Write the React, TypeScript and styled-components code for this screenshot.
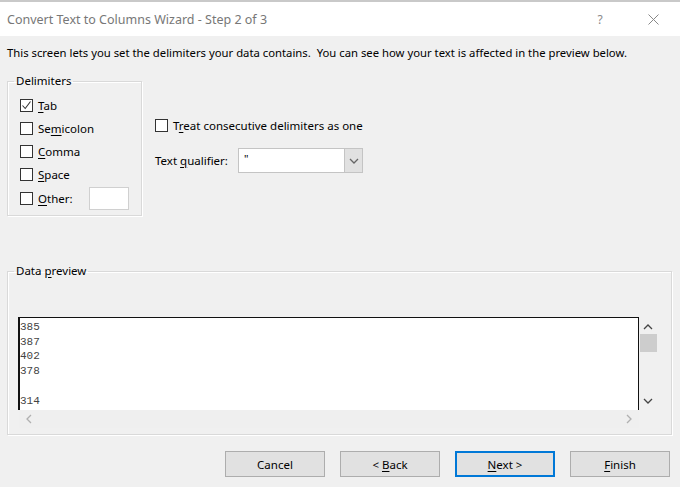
import React from "react";
import styled, { createGlobalStyle } from "styled-components";

const Global = createGlobalStyle`
  html, body { margin: 0; padding: 0; background: #f0f0f0; }
  body { width: 680px; height: 487px; overflow: hidden; font-family: "Noto Sans", "Open Sans", sans-serif; }
  * { box-sizing: border-box; }
`;

const Dialog = styled.div`
  width: 680px;
  height: 487px;
  display: flex;
  flex-direction: column;
  background: #f0f0f0;
  border-top: 2px solid #c9c9c9;
`;

const TitleBar = styled.div`
  height: 34px;
  background: #fff;
  display: flex;
  align-items: center;
  padding-left: 7px;
  color: #777;
  font-size: 12.5px;
`;

const Title = styled.div`
  flex: 1;
`;

const TitleBtn = styled.div<{ $w: number }>`
  width: ${(p) => p.$w}px;
  display: flex;
  justify-content: center;
  color: #8a8a8a;
  font-size: 12px;
`;

const Body = styled.div`
  flex: 1;
  display: flex;
  flex-direction: column;
  padding: 8px 9px 0 7px;
  font-size: 11.5px;
  color: #000;
`;

const Intro = styled.div`
  height: 16px;
  line-height: 16px;
  font-size: 11.3px;
  padding-top: 1px;
`;

const TopRow = styled.div`
  display: flex;
  margin-top: 13px;
`;

const Group = styled.fieldset<{ $w: number; $h: number }>`
  margin: 0;
  width: ${(p) => p.$w}px;
  height: ${(p) => p.$h}px;
  border: 1px solid #d9d9d9;
  box-shadow: inset 1px 1px 0 #fff, 1px 1px 0 #fff;
  padding: 0;
`;

const Legend = styled.legend`
  margin-left: 6px;
  padding: 0 2px;
  font-size: 11.5px;
  line-height: 16px;
  color: #000;
`;

const DelimList = styled.div`
  display: flex;
  flex-direction: column;
  padding: 5px 0 0 12px;
`;

const CheckRow = styled.div<{ $h?: number }>`
  display: flex;
  align-items: center;
  height: ${(p) => p.$h ?? 23}px;
  gap: 5px;
`;

const Box = styled.span`
  width: 13px;
  height: 13px;
  border: 1px solid #333;
  background: #fff;
  display: inline-flex;
  align-items: center;
  justify-content: center;
  flex: none;
`;

const U = styled.span`
  text-decoration: underline;
  text-underline-offset: 2px;
`;

const OtherInput = styled.div`
  width: 40px;
  height: 23px;
  background: #fff;
  border: 1px solid #d0d0d0;
  margin-left: 11px;
`;

const RightCol = styled.div`
  display: flex;
  flex-direction: column;
  padding: 44px 0 0 13px;
`;

const QualRow = styled.div`
  display: flex;
  align-items: center;
  margin-top: 15px;
`;

const QualLabel = styled.span`
  width: 83px;
`;

const Select = styled.div`
  width: 125px;
  height: 25px;
  background: #fff;
  border: 1px solid #c4c4c4;
  display: flex;
`;

const SelectValue = styled.div`
  flex: 1;
  padding: 2px 0 0 5px;
  font-size: 11px;
`;

const SelectBtn = styled.div`
  width: 18px;
  background: #e1e1e1;
  border-left: 1px solid #c4c4c4;
  display: flex;
  align-items: center;
  justify-content: center;
`;

const PreviewGroup = styled(Group)`
  margin-top: 47px;
`;

const PreviewArea = styled.div`
  display: grid;
  grid-template-columns: 620px 18px;
  grid-template-rows: 93px 18px;
  margin: 38px 0 0 11px;
`;

const PreviewBox = styled.div`
  background: #fff;
  border-left: 2px solid #111;
  border-top: 1px solid #111;
  border-right: 1px solid #111;
  font-family: "Liberation Mono", monospace;
  font-size: 11px;
  line-height: 14.7px;
  color: #444;
  padding: 2px 0 0 0;
  margin-left: -1px;
  white-space: pre;
  overflow: hidden;
`;

const VScroll = styled.div`
  display: flex;
  flex-direction: column;
  align-items: center;
  background: #f0f0f0;
`;

const Thumb = styled.div`
  width: 17px;
  height: 18px;
  background: #cdcdcd;
  margin-top: 3px;
`;

const HScroll = styled.div`
  display: flex;
  align-items: center;
  justify-content: space-between;
  padding: 0 6px 0 6px;
  background: #efefef;
`;

const Buttons = styled.div`
  display: flex;
  justify-content: flex-end;
  gap: 15px;
  margin-top: 16px;
  padding-right: 1px;
`;

const Btn = styled.div<{ $primary?: boolean }>`
  width: 100px;
  height: 26px;
  background: #e1e1e1;
  border: ${(p) => (p.$primary ? "2px solid #0078d7" : "1px solid #adadad")};
  display: flex;
  align-items: center;
  justify-content: center;
  font-size: 11.5px;
  color: #000;
`;

const Check = () => (
  <svg width="11" height="11" viewBox="0 0 11 11">
    <path d="M1.5 5.5 L4.2 8.5 L9.5 1.5" fill="none" stroke="#333" strokeWidth="1.1" />
  </svg>
);

const Chevron = ({ dir, color = "#444" }: { dir: "up" | "down" | "left" | "right"; color?: string }) => {
  const d = {
    up: "M1 6 L5 2 L9 6",
    down: "M1 2 L5 6 L9 2",
    left: "M6 1 L2 5 L6 9",
    right: "M2 1 L6 5 L2 9",
  }[dir];
  const horiz = dir === "up" || dir === "down";
  return (
    <svg width={horiz ? 10 : 8} height={horiz ? 8 : 10} viewBox={horiz ? "0 0 10 8" : "0 0 8 10"}>
      <path d={d} fill="none" stroke={color} strokeWidth="1.3" />
    </svg>
  );
};

const Spacer = styled.div<{ $h?: number }>`
  height: ${(p) => (p.$h ? `${p.$h}px` : "auto")};
  flex: ${(p) => (p.$h ? "none" : "1")};
`;

const delims: { pre: string; u: string; post: string; checked?: boolean }[] = [
  { pre: "", u: "T", post: "ab", checked: true },
  { pre: "Se", u: "m", post: "icolon" },
  { pre: "", u: "C", post: "omma" },
  { pre: "", u: "S", post: "pace" },
];

export default function App() {
  return (
    <>
      <Global />
      <Dialog>
        <TitleBar>
          <Title>Convert Text to Columns Wizard - Step 2 of 3</Title>
          <TitleBtn $w={52}>?</TitleBtn>
          <TitleBtn $w={54}>
            <svg width="11" height="11" viewBox="0 0 11 11">
              <path d="M0.5 0.5 L10.5 10.5 M10.5 0.5 L0.5 10.5" stroke="#888" strokeWidth="1" />
            </svg>
          </TitleBtn>
        </TitleBar>
        <Body>
          <Intro>
            This screen lets you set the delimiters your data contains.&nbsp; You can see how your text is affected in the preview below.
          </Intro>
          <TopRow>
            <Group $w={135} $h={143}>
              <Legend>Delimiters</Legend>
              <DelimList>
                {delims.map((d) => (
                  <CheckRow key={d.u + d.post}>
                    <Box>{d.checked && <Check />}</Box>
                    <span>
                      {d.pre}
                      <U>{d.u}</U>
                      {d.post}
                    </span>
                  </CheckRow>
                ))}
                <CheckRow $h={24}>
                  <Box />
                  <span>
                    <U>O</U>ther:
                  </span>
                  <OtherInput />
                </CheckRow>
              </DelimList>
            </Group>
            <RightCol>
              <CheckRow $h={16}>
                <Box />
                <span>
                  T<U>r</U>eat consecutive delimiters as one
                </span>
              </CheckRow>
              <QualRow>
                <QualLabel>
                  Text <U>q</U>ualifier:
                </QualLabel>
                <Select>
                  <SelectValue>"</SelectValue>
                  <SelectBtn>
                    <Chevron dir="down" color="#666" />
                  </SelectBtn>
                </Select>
              </QualRow>
            </RightCol>
          </TopRow>
          <PreviewGroup $w={665} $h={172}>
            <Legend>
              Data <U>p</U>review
            </Legend>
            <PreviewArea>
              <PreviewBox>{"385\n387\n402\n378\n\n314"}</PreviewBox>
              <VScroll>
                <Spacer $h={6} />
                <Chevron dir="up" />
                <Thumb />
                <Spacer />
                <Chevron dir="down" />
                <Spacer $h={5} />
              </VScroll>
              <HScroll>
                <Chevron dir="left" color="#b0b0b0" />
                <Chevron dir="right" color="#b0b0b0" />
              </HScroll>
              <div />
            </PreviewArea>
          </PreviewGroup>
          <Buttons>
            <Btn>Cancel</Btn>
            <Btn>
              &lt;&nbsp;<U>B</U>ack
            </Btn>
            <Btn $primary>
              <U>N</U>ext &gt;
            </Btn>
            <Btn>
              <U>F</U>inish
            </Btn>
          </Buttons>
        </Body>
      </Dialog>
    </>
  );
}
